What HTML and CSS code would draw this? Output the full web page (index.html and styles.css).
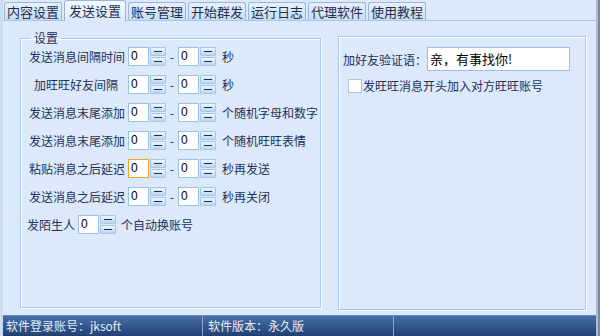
FILE: index.html
```html
<!DOCTYPE html>
<html lang="zh-CN">
<head>
    <meta charset="UTF-8">
    <title>发送设置</title>
    <link rel="stylesheet" href="styles.css">
</head>
<body>
    <div class="window">
        <div class="tabs">
            <div class="tab">内容设置</div>
            <div class="tab active">发送设置</div>
            <div class="tab">账号管理</div>
            <div class="tab">开始群发</div>
            <div class="tab">运行日志</div>
            <div class="tab">代理软件</div>
            <div class="tab">使用教程</div>
        </div>

        <div class="main">
            <fieldset class="group left">
                <legend>设置</legend>

                <div class="row">
                    <span class="label">发送消息间隔时间</span>
                    <span class="num">0</span><span class="spin"><span class="up"></span><span></span></span>
                    <span class="dash">-</span>
                    <span class="num">0</span><span class="spin"><span class="up"></span><span></span></span>
                    <span class="suffix">秒</span>
                </div>
                <div class="row">
                    <span class="label short">加旺旺好友间隔</span>
                    <span class="num">0</span><span class="spin"><span class="up"></span><span></span></span>
                    <span class="dash">-</span>
                    <span class="num">0</span><span class="spin"><span class="up"></span><span></span></span>
                    <span class="suffix">秒</span>
                </div>
                <div class="row">
                    <span class="label">发送消息末尾添加</span>
                    <span class="num">0</span><span class="spin"><span class="up"></span><span></span></span>
                    <span class="dash">-</span>
                    <span class="num">0</span><span class="spin"><span class="up"></span><span></span></span>
                    <span class="suffix">个随机字母和数字</span>
                </div>
                <div class="row">
                    <span class="label">发送消息末尾添加</span>
                    <span class="num">0</span><span class="spin"><span class="up"></span><span></span></span>
                    <span class="dash">-</span>
                    <span class="num">0</span><span class="spin"><span class="up"></span><span></span></span>
                    <span class="suffix">个随机旺旺表情</span>
                </div>
                <div class="row">
                    <span class="label">粘贴消息之后延迟</span>
                    <span class="num focus">0</span><span class="spin"><span class="up"></span><span></span></span>
                    <span class="dash">-</span>
                    <span class="num">0</span><span class="spin"><span class="up"></span><span></span></span>
                    <span class="suffix">秒再发送</span>
                </div>
                <div class="row">
                    <span class="label">发送消息之后延迟</span>
                    <span class="num">0</span><span class="spin"><span class="up"></span><span></span></span>
                    <span class="dash">-</span>
                    <span class="num">0</span><span class="spin"><span class="up"></span><span></span></span>
                    <span class="suffix">秒再关闭</span>
                </div>
                <div class="row">
                    <span class="label auto">发陌生人</span>
                    <span class="num">0</span><span class="spin"><span class="up"></span><span></span></span>
                    <span class="suffix tight">个自动换账号</span>
                </div>
            </fieldset>

            <div class="group right">
                <div class="verify">
                    <span class="verify-label">加好友验证语：</span>
                    <span class="text-input">亲，有事找你!</span>
                </div>
                <label class="check">
                    <span class="box"></span>发旺旺消息开头加入对方旺旺账号
                </label>
            </div>
        </div>

        <div class="statusbar">
            <div class="cell first">软件登录账号：jksoft</div>
            <div class="cell second">软件版本：永久版</div>
            <div class="cell"></div>
        </div>
    </div>
</body>
</html>
```

FILE: styles.css
```css
body {
    margin: 0;
    width: 600px;
    height: 336px;
    overflow: hidden;
    background: #7d8898;
    font-family: "Noto Sans CJK SC", "Noto Sans", sans-serif;
    font-size: 12px;
    color: #1f3157;
}

.window {
    width: 598px;
    height: 336px;
    box-sizing: border-box;
    background: #dbe9fa;
    border-left: 3px solid #c9dcf2;
    border-right: 2px solid #a9bcd3;
    display: flex;
    flex-direction: column;
}

/* tab strip */
.tabs {
    display: flex;
    align-items: flex-end;
    gap: 2px;
    height: 21px;
    padding-left: 1px;
    box-sizing: border-box;
    border-bottom: 1px solid #a7c5ea;
}

.tab {
    height: 17px;
    line-height: 17px;
    padding: 0 2px;
    font-size: 13px;
    color: #1e2f52;
    border: 1px solid #98b6dc;
    border-bottom: none;
    border-radius: 3px 3px 0 0;
    background: linear-gradient(#e8f1fc, #c9dcf2);
}

.tab.active {
    height: 20px;
    line-height: 20px;
    padding: 0 4px;
    margin-bottom: -1px;
    background: linear-gradient(#f4f9fe, #dbe9fa);
}

/* body */
.main {
    height: 293px;
    display: flex;
    gap: 17px;
    padding-left: 17px;
}

.group {
    box-sizing: border-box;
    border: 1px solid #a6c6ec;
    box-shadow: inset 1px 1px 0 #fff, 1px 1px 0 #fff;
    margin: 0;
}

.left {
    width: 301px;
    height: 278px;
    margin-top: 9px;
    padding: 1px 0 0 6px;
}

.left legend {
    padding: 0 3px;
    margin-left: 4px;
    line-height: 16px;
    color: #1f3157;
}

.row {
    display: flex;
    align-items: center;
    height: 19px;
    margin-bottom: 9px;
}

.label {
    width: 98px;
    box-sizing: border-box;
    text-align: right;
    margin-right: 3px;
    white-space: nowrap;
}

.label.short {
    padding-right: 7px;
}

.label.auto {
    width: auto;
    margin-right: 3px;
}

.num {
    width: 21px;
    height: 19px;
    box-sizing: border-box;
    border: 1px solid #9cc0e8;
    background: #fff;
    padding-left: 2px;
    line-height: 17px;
    font-family: "Liberation Sans", sans-serif;
    font-size: 12px;
    color: #000;
}

.num.focus {
    border-color: #f0a02c;
}

.spin {
    width: 16px;
    height: 19px;
    margin-left: 1px;
    display: flex;
    flex-direction: column;
    gap: 1px;
}

.spin span {
    flex: 1;
    display: flex;
    align-items: center;
    justify-content: center;
    border: 1px solid #a9c7ea;
    border-radius: 1px;
    background: linear-gradient(#eef5fd, #bcd4f0);
}

.spin span::after {
    content: '';
    width: 8px;
    height: 1px;
    background: #1e3050;
}

.dash {
    width: 12px;
    text-align: center;
}

.suffix {
    margin-left: 6px;
    white-space: nowrap;
}

.suffix.tight {
    margin-left: 5px;
}

/* right box */
.right {
    width: 248px;
    height: 274px;
    margin-top: 15px;
    padding: 10px 0 0 4px;
}

.verify {
    display: flex;
    align-items: center;
}

.verify-label {
    width: 84px;
    white-space: nowrap;
}

.text-input {
    width: 143px;
    height: 24px;
    box-sizing: border-box;
    border: 1px solid #9cc0e8;
    background: #fff;
    padding-left: 2px;
    line-height: 22px;
    font-size: 13px;
    color: #000;
}

.check {
    display: flex;
    align-items: center;
    margin: 6px 0 0 5px;
    white-space: nowrap;
}

.box {
    width: 14px;
    height: 14px;
    box-sizing: border-box;
    border: 1px solid #a8c6ea;
    background: #fff;
    margin-right: 1px;
}

/* status bar */
.statusbar {
    flex: 1;
    display: flex;
    margin-top: 1px;
    background: linear-gradient(#4670a9, #223f70);
    border-top: 1px solid #6a8cbc;
    color: #e3ebf7;
}

.cell {
    box-sizing: border-box;
    line-height: 20px;
    white-space: nowrap;
    border-right: 1px solid #8aa8d2;
}

.cell.first {
    width: 200px;
    padding-left: 3px;
}

.cell.second {
    width: 191px;
    padding-left: 5px;
}

.cell:last-child {
    border-right: none;
}
```
